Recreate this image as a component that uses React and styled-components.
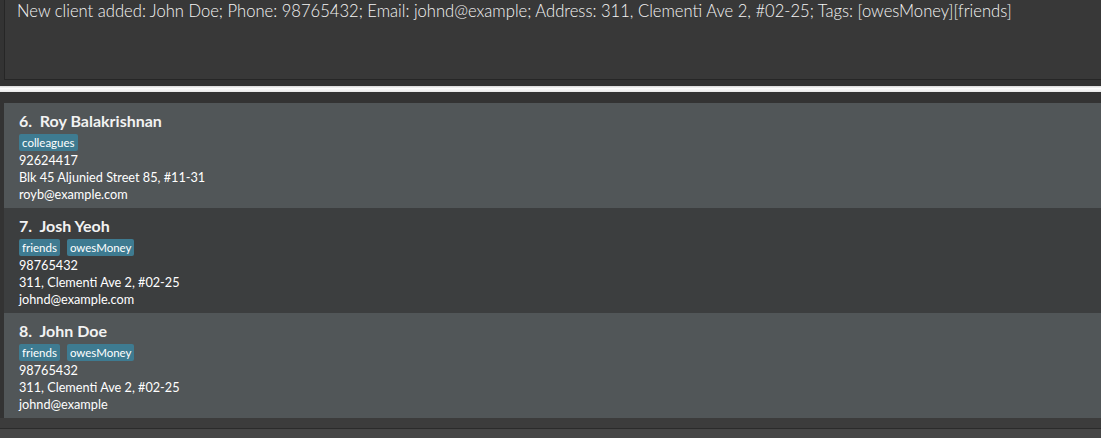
import React from "react";
import styled, { createGlobalStyle } from "styled-components";

const GlobalStyle = createGlobalStyle`
  html, body {
    margin: 0;
    padding: 0;
    background: #333333;
    font-family: "Lato", "Liberation Sans", sans-serif;
  }
`;

const Window = styled.div`
  width: 1101px;
  height: 438px;
  display: flex;
  flex-direction: column;
  background: #333333;
  overflow: hidden;
`;

const ResultPane = styled.div`
  height: 86px;
  padding: 0 0 0 4px;
  box-sizing: border-box;
  display: flex;
  flex-direction: column;
`;

const ResultBox = styled.div`
  height: 80px;
  box-sizing: border-box;
  background: #383838;
  border-left: 1px solid #262626;
  border-bottom: 1px solid #262626;
  padding: 1px 0 0 12px;
  color: #f4f4f4;
  font-size: 16.6px;
  font-weight: 300;
  white-space: nowrap;
`;

const Divider = styled.div`
  height: 6px;
  background: linear-gradient(#d8d8d8, #ffffff 40%, #e6e6e6);
`;

const ListPane = styled.div`
  flex: 1;
  display: flex;
  flex-direction: column;
  padding: 11px 0 0 4px;
  background: #333333;
`;

const Card = styled.div`
  height: 105px;
  box-sizing: border-box;
  padding: 8px 0 0 15px;
  background: ${({ $odd }) => ($odd ? "#515658" : "#3c3e3f")};
  color: #ffffff;
  display: flex;
  flex-direction: column;
`;

const Name = styled.div`
  font-size: 16px;
  font-weight: 700;
  line-height: 20px;
  color: #f2f2f2;
`;

const Tags = styled.div`
  display: flex;
  gap: 7px;
  margin: 3px 0 1px;
`;

const Tag = styled.span`
  background: #3e7b91;
  color: #ffffff;
  font-size: 11.5px;
  line-height: 17px;
  padding: 0 3px;
  border-radius: 2px;
`;

const Line = styled.div`
  font-size: 12.7px;
  line-height: 17px;
  color: #ffffff;
`;

const Footer = styled.div`
  height: 20px;
  display: flex;
  flex-direction: column;
`;

const FooterTop = styled.div`
  height: 10px;
  background: #3c3c3c;
  border-bottom: 1px solid #2b2b2b;
`;

const FooterBottom = styled.div`
  flex: 1;
  background: #464646;
`;

const persons = [
  {
    idx: 6,
    name: "Roy Balakrishnan",
    tags: ["colleagues"],
    phone: "92624417",
    address: "Blk 45 Aljunied Street 85, #11-31",
    email: "royb@example.com",
  },
  {
    idx: 7,
    name: "Josh Yeoh",
    tags: ["friends", "owesMoney"],
    phone: "98765432",
    address: "311, Clementi Ave 2, #02-25",
    email: "johnd@example.com",
  },
  {
    idx: 8,
    name: "John Doe",
    tags: ["friends", "owesMoney"],
    phone: "98765432",
    address: "311, Clementi Ave 2, #02-25",
    email: "johnd@example",
  },
];

export default function App() {
  return (
    <Window>
      <GlobalStyle />
      <ResultPane>
        <ResultBox>
          New client added: John Doe; Phone: 98765432; Email: johnd@example; Address: 311, Clementi Ave 2, #02-25; Tags: [owesMoney][friends]
        </ResultBox>
      </ResultPane>
      <Divider />
      <ListPane>
        {persons.map((p, i) => (
          <Card key={p.idx} $odd={i % 2 === 0}>
            <Name>
              {p.idx}.&nbsp; {p.name}
            </Name>
            <Tags>
              {p.tags.map((t) => (
                <Tag key={t}>{t}</Tag>
              ))}
            </Tags>
            <Line>{p.phone}</Line>
            <Line>{p.address}</Line>
            <Line>{p.email}</Line>
          </Card>
        ))}
      </ListPane>
      <Footer>
        <FooterTop />
        <FooterBottom />
      </Footer>
    </Window>
  );
}
